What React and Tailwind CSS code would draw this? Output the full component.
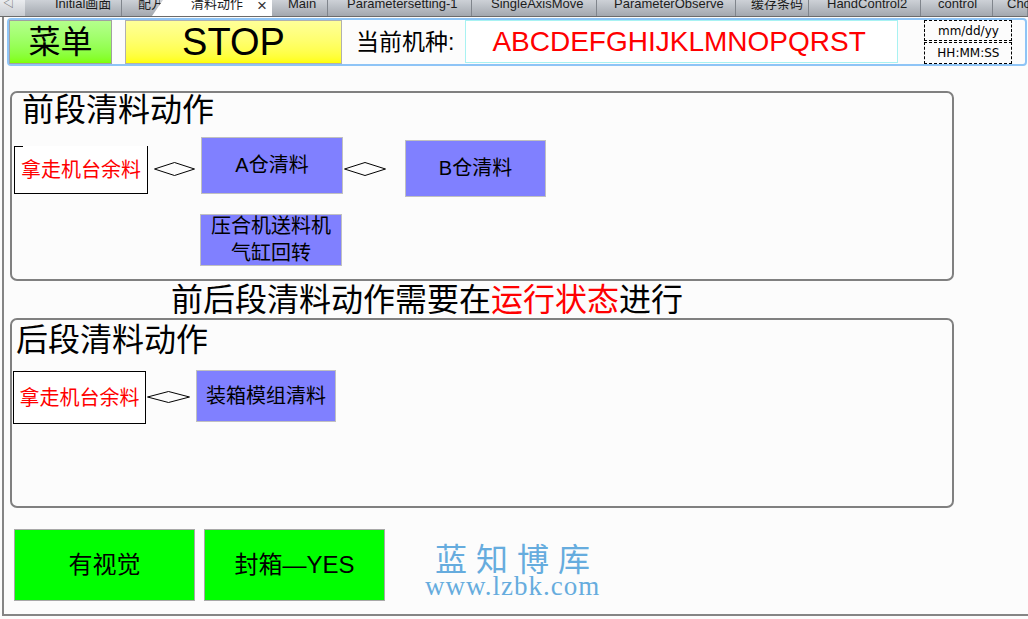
import React from 'react';

const TABS = [
  { label: 'Initial画面', w: 97, pl: 30 },
  { label: '配方', w: 38, pl: 16 },
  { label: '清料动作', w: 112, pl: 31, active: true },
  { label: 'Main', w: 56, pl: 16 },
  { label: 'Parametersetting-1', w: 144, pl: 19 },
  { label: 'SingleAxisMove', w: 125, pl: 19 },
  { label: 'ParameterObserve', w: 139, pl: 17 },
  { label: '缓存条码', w: 73, pl: 15 },
  { label: 'HandControl2', w: 112, pl: 18 },
  { label: 'control', w: 72, pl: 17 },
  { label: 'Cho', w: 35, pl: 14 },
];

function Diamond({ w, h }) {
  return (
    <svg width={w} height={h} viewBox={`0 0 ${w} ${h}`} className="block">
      <polygon points={`0.5,${h / 2} ${w / 2},0.5 ${w - 0.5},${h / 2} ${w / 2},${h - 0.5}`} fill="none" stroke="#000" strokeWidth="1" />
    </svg>
  );
}

function BlueBox({ className, children }) {
  return (
    <div className={`bg-[#8080ff] border border-[#c0c0c0] flex flex-col items-center justify-center text-[20px] leading-[27px] text-black ${className}`}>
      {children}
    </div>
  );
}

export default function App() {
  return (
    <div className="w-[1028px] h-[619px] bg-[#fcfcfc] overflow-hidden flex flex-col font-['Liberation_Sans','Noto_Sans_CJK_SC',sans-serif]">
      {/* TAB STRIP */}
      <div className="h-[17px] flex border-b border-[#6b6b6b] bg-gradient-to-b from-[#cdd1d7] to-[#a3a8af] overflow-hidden">
        <div className="w-[25px] bg-gradient-to-b from-[#eef0f3] to-[#c9ccd1] text-[11px] leading-[11px] text-[#606060] pl-[3px] -mt-[2px]">◁</div>
        {TABS.map(t => (
          <div
            key={t.label}
            style={{ width: t.active ? t.w + 10 : t.w, paddingLeft: t.pl }}
            className={
              t.active
                ? 'relative z-10 -ml-[10px] flex items-start bg-white [clip-path:polygon(13px_0,100%_0,100%_100%,2px_100%)] text-[13px] leading-[13px] text-[#202020]'
                : 'flex items-start border-r border-[#80858c] text-[13px] leading-[13px] text-[#1c1c1c] whitespace-nowrap'
            }
          >
            <span className={t.active ? '-mt-[3px] ml-[10px] whitespace-nowrap' : '-mt-[3px] whitespace-nowrap'}>{t.label}</span>
            {t.active && <span className="absolute left-[107px] -top-[3px] text-[17px] leading-[17px] text-[#333]">×</span>}
          </div>
        ))}
      </div>

      {/* PAGE */}
      <div className="ml-[2px] w-[1026px] h-[599px] border-l-2 border-b-2 border-[#858585] flex flex-col">
        {/* HEADER */}
        <div className="ml-[3px] mt-[1px] w-[1020px] h-[48px] border-2 border-[#8ec4f6] rounded-[4px] flex items-start">
          <div className="w-[103px] h-[44px] border border-[#a0a0a0] bg-gradient-to-b from-[#b4ff8c] to-[#80ff00] flex items-center justify-center text-[32px] leading-[32px] text-black">
            菜单
          </div>
          <div className="ml-[13px] w-[217px] h-[44px] border border-[#b0b0b0] bg-gradient-to-b from-[#ffff98] to-[#ffff00] flex items-center justify-center text-[38px] leading-[38px] text-black">
            STOP
          </div>
          <div className="ml-[14px] h-[44px] flex items-center text-[23px] leading-[23px] text-black whitespace-nowrap">当前机种:</div>
          <div className="ml-[11px] w-[433px] h-[43px] border border-[#a8f2f2] bg-white flex items-center pl-[26px] text-[28px] leading-[28px] text-[#ff0000]">
            ABCDEFGHIJKLMNOPQRST
          </div>
          <div className="ml-[26px] w-[88px] flex flex-col gap-[1px] font-['DejaVu_Sans',sans-serif] text-[12px] text-black">
            <div className="h-[21px] border border-dashed border-black flex items-center justify-center">mm/dd/yy</div>
            <div className="h-[22px] border border-dashed border-black flex items-center justify-center">HH:MM:SS</div>
          </div>
        </div>

        {/* SECTION 1 */}
        <div className="ml-[6px] mt-[25px] w-[944px] h-[190px] border-2 border-[#808080] rounded-[7px] flex flex-col">
          <div className="mt-[1px] pl-[10px] text-[32px] leading-[32px] text-black">前段清料动作</div>
          <div className="mt-[11px] flex items-start">
            <div className="ml-[2px] mt-[9px] w-[134px] h-[48px] border-l border-r border-b border-black bg-white flex flex-col">
              <div className="w-[8px] h-px bg-black"></div>
              <div className="flex-1 flex items-center justify-center text-[20px] leading-[20px] text-[#ff0000]">拿走机台余料</div>
            </div>
            <div className="ml-[6px] mt-[25px]"><Diamond w={41} h={14} /></div>
            <BlueBox className="ml-[6px] w-[142px] h-[57px]">A仓清料</BlueBox>
            <div className="ml-[1px] mt-[25px]"><Diamond w={42} h={14} /></div>
            <BlueBox className="ml-[19px] mt-[3px] w-[141px] h-[57px]">B仓清料</BlueBox>
          </div>
          <BlueBox className="ml-[188px] mt-[17px] w-[142px] h-[52px]">
            <span>压合机送料机</span>
            <span>气缸回转</span>
          </BlueBox>
        </div>

        {/* NOTE */}
        <div className="ml-[167px] mt-[3px] text-[32px] leading-[32px] text-black whitespace-nowrap">
          前后段清料动作需要在<span className="text-[#ff0000]">运行状态</span>进行
        </div>

        {/* SECTION 2 */}
        <div className="ml-[6px] mt-[2px] w-[944px] h-[190px] border-2 border-[#808080] rounded-[7px] flex flex-col">
          <div className="mt-[4px] pl-[4px] text-[32px] leading-[32px] text-black">后段清料动作</div>
          <div className="mt-[14px] flex items-start">
            <div className="ml-[1px] mt-[1px] w-[133px] h-[53px] border border-black bg-white flex items-center justify-center text-[20px] leading-[20px] text-[#ff0000]">
              拿走机台余料
            </div>
            <div className="ml-[1px] mt-[21px]"><Diamond w={43} h={12} /></div>
            <BlueBox className="ml-[6px] w-[140px] h-[52px]">装箱模组清料</BlueBox>
          </div>
        </div>

        {/* BOTTOM BUTTONS */}
        <div className="mt-[21px] flex items-start">
          <div className="ml-[10px] w-[181px] h-[72px] border border-[#a8a8a8] bg-[#00ff00] flex items-center justify-center text-[24px] leading-[24px] text-black">
            有视觉
          </div>
          <div className="ml-[9px] w-[181px] h-[72px] border border-[#a8a8a8] bg-[#00ff00] flex items-center justify-center text-[24px] leading-[24px] text-black">
            封箱—YES
          </div>
          <div className="ml-[40px] mt-[11px] flex flex-col items-center text-[#66acde]">
            <div className="text-[32px] leading-[34px] tracking-[9px] pl-[9px] font-['Noto_Sans_CJK_SC',serif]">蓝知博库</div>
            <div className="text-[27px] leading-[24px] tracking-[1px] font-['Liberation_Serif',serif]">www.lzbk.com</div>
          </div>
        </div>
      </div>
    </div>
  );
}
